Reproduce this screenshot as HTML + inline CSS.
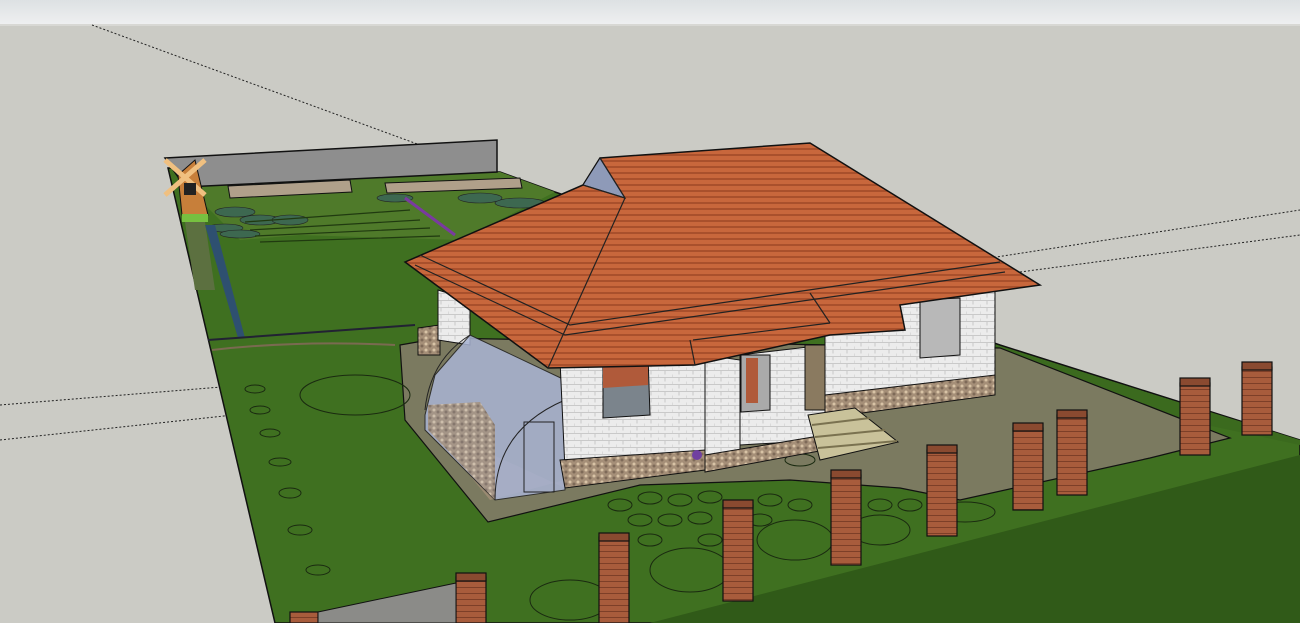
<!DOCTYPE html>
<html><head><style>
html,body{margin:0;padding:0;width:1300px;height:623px;overflow:hidden;background:#cbcbc5}
svg{display:block}
</style></head><body>
<svg width="1300" height="623" viewBox="0 0 1300 623" xmlns="http://www.w3.org/2000/svg">
<defs>
<linearGradient id="tb" x1="0" y1="0" x2="0" y2="1"><stop offset="0" stop-color="#dde1e3"/><stop offset="1" stop-color="#eeeff0"/></linearGradient>
<pattern id="tile" width="8" height="6" patternUnits="userSpaceOnUse"><rect width="8" height="6" fill="#c8673c"/><rect y="4" width="8" height="2" fill="#a9502c"/></pattern>
<pattern id="brick" width="14" height="7" patternUnits="userSpaceOnUse"><rect width="14" height="7" fill="#ececec"/><path d="M0 6.5H14M7 0V3.5M0 3.5V7" stroke="#c9c9c9" stroke-width="1"/></pattern>
<pattern id="stone" width="8" height="6" patternUnits="userSpaceOnUse"><rect width="8" height="6" fill="#a58f78"/><circle cx="2" cy="2" r="1.5" fill="#d8c3a6"/><circle cx="6" cy="4" r="1.5" fill="#7e6a58"/></pattern>
<pattern id="rb" width="6" height="6" patternUnits="userSpaceOnUse"><rect width="6" height="6" fill="#a85c3c"/><path d="M0 5.5H6" stroke="#7d3f28"/></pattern>
</defs>
<rect width="1300" height="24" fill="url(#tb)"/>
<rect y="24" width="1300" height="2" fill="#d8d8d4"/>
<!-- axis dotted lines -->
<g stroke="#222" stroke-width="1" stroke-dasharray="2,2" fill="none">
<path d="M92 25L420 145"/><path d="M0 405L430 370"/><path d="M0 440L420 395"/>
<path d="M990 258L1300 210"/><path d="M1020 272L1300 235"/>
</g>
<!-- ground -->
<polygon points="168,168 500,172 555,192 1000,345 1300,440 1300,623 275,623" fill="#3f7020" stroke="#111" stroke-width="1.5"/>
<polygon points="995,345 1300,440 1300,445 1230,430 995,380" fill="#3b6a1e"/>
<polygon points="650,623 1300,455 1300,623" fill="#305a18"/>
<!-- back garden -->
<polygon points="185,185 500,172 555,192 460,240 300,235 240,240" fill="#4f7a2a"/>
<g fill="#3d6850" stroke="#222" stroke-width="0.6">
<ellipse cx="235" cy="212" rx="20" ry="5"/><ellipse cx="260" cy="220" rx="20" ry="5"/><ellipse cx="290" cy="220" rx="18" ry="5"/><ellipse cx="225" cy="228" rx="18" ry="4"/><ellipse cx="240" cy="234" rx="20" ry="4"/>
<ellipse cx="520" cy="203" rx="25" ry="5"/><ellipse cx="480" cy="198" rx="22" ry="5"/><ellipse cx="395" cy="198" rx="18" ry="4"/>
</g>
<g stroke="#203a10" stroke-width="1.2"><path d="M245 222L410 210M250 230L420 220M255 236L430 228M260 242L440 236"/></g>
<polygon points="185,222 205,222 215,290 195,290" fill="#5c7040"/>
<polygon points="205,225 215,225 245,338 238,338" fill="#2e5070"/>
<path d="M208 340L415 325" stroke="#223" stroke-width="2"/>
<path d="M212 350Q300 340 395 345" stroke="#7a6a50" stroke-width="2" fill="none"/>
<path d="M405 198L455 235" stroke="#7a3aa0" stroke-width="3"/>
<!-- back fence -->
<polygon points="165,158 497,140 497,172 185,187" fill="#8e8e8e" stroke="#111" stroke-width="1.5"/>
<polygon points="228,186 350,180 352,192 230,198" fill="#b0a08a" stroke="#111"/>
<polygon points="385,183 520,178 522,188 387,193" fill="#b0a08a" stroke="#111"/>
<!-- windmill -->
<polygon points="178,175 195,160 208,215 182,215" fill="#c77f3a" stroke="#111"/>
<path d="M165 160L205 195M205 160L165 195" stroke="#f0c080" stroke-width="5"/>
<rect x="184" y="183" width="12" height="12" fill="#222"/>
<rect x="182" y="214" width="26" height="8" fill="#77c040"/>
<!-- paved -->
<polygon points="400,345 440,338 1000,348 1230,438 1150,458 960,500 900,488 790,480 640,485 488,522 405,420" fill="#7b7a60" stroke="#111" stroke-width="1.2"/>
<!-- yard circles -->
<g fill="none" stroke="#1a2a10" stroke-width="1">
<ellipse cx="355" cy="395" rx="55" ry="20"/><ellipse cx="255" cy="389" rx="10" ry="4"/><ellipse cx="260" cy="410" rx="10" ry="4"/><ellipse cx="270" cy="433" rx="10" ry="4"/><ellipse cx="280" cy="462" rx="11" ry="4"/><ellipse cx="290" cy="493" rx="11" ry="5"/><ellipse cx="300" cy="530" rx="12" ry="5"/><ellipse cx="318" cy="570" rx="12" ry="5"/>
<ellipse cx="690" cy="570" rx="40" ry="22"/><ellipse cx="795" cy="540" rx="38" ry="20"/><ellipse cx="880" cy="530" rx="30" ry="15"/><ellipse cx="570" cy="600" rx="40" ry="20"/>
<ellipse cx="620" cy="505" rx="12" ry="6"/><ellipse cx="650" cy="498" rx="12" ry="6"/><ellipse cx="680" cy="500" rx="12" ry="6"/><ellipse cx="710" cy="497" rx="12" ry="6"/><ellipse cx="770" cy="500" rx="12" ry="6"/><ellipse cx="640" cy="520" rx="12" ry="6"/><ellipse cx="670" cy="520" rx="12" ry="6"/><ellipse cx="700" cy="518" rx="12" ry="6"/><ellipse cx="760" cy="520" rx="12" ry="6"/><ellipse cx="800" cy="505" rx="12" ry="6"/><ellipse cx="650" cy="540" rx="12" ry="6"/><ellipse cx="710" cy="540" rx="12" ry="6"/><ellipse cx="880" cy="505" rx="12" ry="6"/><ellipse cx="910" cy="505" rx="12" ry="6"/><ellipse cx="965" cy="512" rx="30" ry="10"/><ellipse cx="800" cy="460" rx="15" ry="6"/>
</g>
<!-- left annex -->
<polygon points="418,328 440,325 440,355 418,355" fill="url(#stone)" stroke="#111"/>
<polygon points="438,290 470,300 470,345 438,340" fill="url(#brick)" stroke="#111"/>
<!-- greenhouse -->
<polygon points="428,425 565,488 565,480 490,500 428,425" fill="#9a8a72"/>
<polygon points="425,415 435,375 470,335 565,380 565,490 495,500 425,430" fill="#a9b4d4" opacity="0.85" stroke="#222"/>
<polygon points="428,405 480,402 495,425 495,500 428,430" fill="url(#stone)" opacity="0.8"/>
<path d="M495 500Q495 430 565 400" stroke="#222" fill="none"/>
<path d="M425 410Q430 360 470 335" stroke="#222" fill="none"/>
<rect x="524" y="422" width="30" height="70" fill="none" stroke="#222"/>
<!-- walls -->
<polygon points="560,360 705,355 705,460 565,470" fill="url(#brick)" stroke="#111"/>
<polygon points="560,460 705,450 705,470 565,488" fill="url(#stone)" stroke="#111"/>
<polygon points="705,355 740,360 740,462 705,470" fill="url(#brick)" stroke="#111"/>
<polygon points="740,355 825,345 825,440 740,445" fill="url(#brick)" stroke="#111"/>
<polygon points="705,455 825,435 825,450 705,472" fill="url(#stone)" stroke="#111"/>
<polygon points="825,300 995,290 995,380 825,400" fill="url(#brick)" stroke="#111"/>
<polygon points="825,395 995,375 995,395 825,418" fill="url(#stone)" stroke="#111"/>
<polygon points="603,358 648,355 650,415 603,418" fill="#7b848c" stroke="#111"/>
<polygon points="603,358 648,355 648,385 603,388" fill="#b05a3a"/>
<polygon points="741,355 770,355 770,410 741,412" fill="#aaa" stroke="#111"/>
<rect x="746" y="358" width="12" height="45" fill="#b05a3a"/>
<polygon points="805,345 825,345 825,410 805,410" fill="#8a7a60" stroke="#111"/>
<polygon points="920,300 960,298 960,355 920,358" fill="#b8b8b8" stroke="#111"/>
<circle cx="697" cy="455" r="5" fill="#7040a0"/>
<!-- steps -->
<polygon points="808,415 855,408 898,442 820,460" fill="#c9c29a" stroke="#111"/>
<path d="M812 425L870 418M815 437L885 430M818 448L897 441" stroke="#7a7250" stroke-width="2"/>
<!-- roof -->
<polygon points="600,158 810,143 1040,285 900,305 905,330 830,335 695,365 548,368 405,262 583,185" fill="url(#tile)" stroke="#111" stroke-width="1.5"/>
<polygon points="583,185 600,158 625,198" fill="#8e9ab8" stroke="#111"/>
<g stroke="#222" stroke-width="1.2" fill="none">
<path d="M625 198L548 368"/><path d="M625 198L583 185"/><path d="M600 158L625 198"/>
<path d="M420 255L570 325L1000 262"/><path d="M415 265L565 335L1005 272"/>
<path d="M693 340L830 323M810 293L830 323"/>
<path d="M695 365L690 340"/>
</g>
<!-- posts -->
<g stroke="#111" stroke-width="1.2">
<rect x="456" y="577" width="30" height="46" fill="url(#rb)"/><rect x="456" y="573" width="30" height="8" fill="#8a4a30"/>
<rect x="290" y="612" width="28" height="11" fill="url(#rb)"/>
<rect x="599" y="537" width="30" height="86" fill="url(#rb)"/><rect x="599" y="533" width="30" height="8" fill="#8a4a30"/>
<rect x="723" y="505" width="30" height="96" fill="url(#rb)"/><rect x="723" y="500" width="30" height="8" fill="#8a4a30"/>
<rect x="831" y="475" width="30" height="90" fill="url(#rb)"/><rect x="831" y="470" width="30" height="8" fill="#8a4a30"/>
<rect x="927" y="450" width="30" height="86" fill="url(#rb)"/><rect x="927" y="445" width="30" height="8" fill="#8a4a30"/>
<rect x="1013" y="428" width="30" height="82" fill="url(#rb)"/><rect x="1013" y="423" width="30" height="8" fill="#8a4a30"/>
<rect x="1057" y="415" width="30" height="80" fill="url(#rb)"/><rect x="1057" y="410" width="30" height="8" fill="#8a4a30"/>
<rect x="1180" y="383" width="30" height="72" fill="url(#rb)"/><rect x="1180" y="378" width="30" height="8" fill="#8a4a30"/>
<rect x="1242" y="367" width="30" height="68" fill="url(#rb)"/><rect x="1242" y="362" width="30" height="8" fill="#8a4a30"/>
</g>
<polygon points="318,612 456,583 456,623 318,623" fill="#8b8b88" stroke="#111"/>
</svg>
</body></html>
